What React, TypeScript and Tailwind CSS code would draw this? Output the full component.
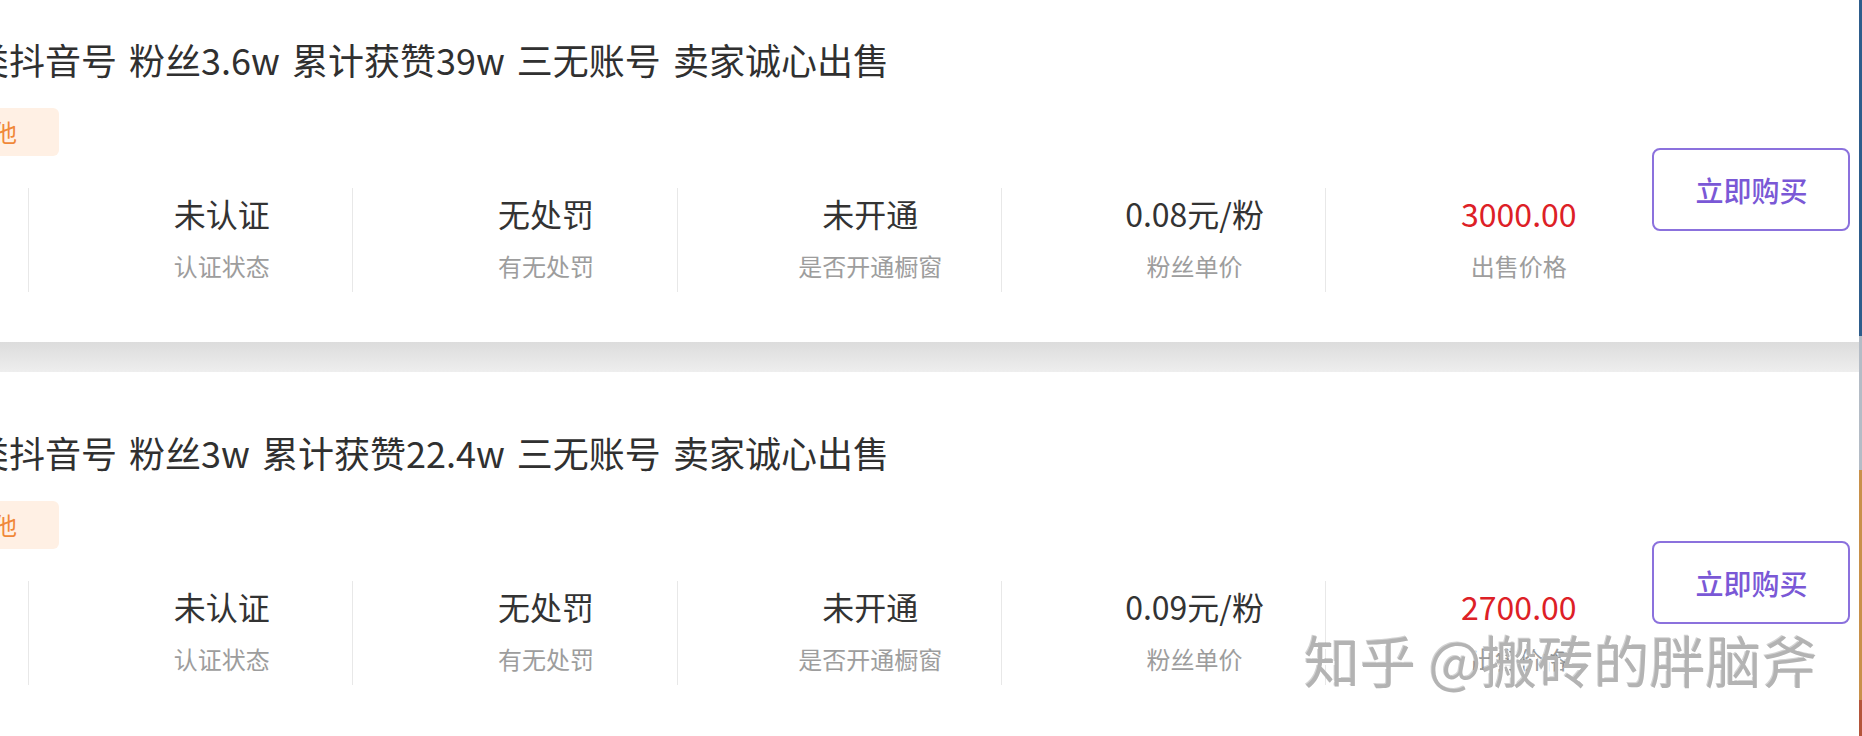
import React from 'react';

type Stat = { value: string; label: string; red?: boolean };

type Listing = { title: string; tag: string; stats: Stat[] };

const listings: Listing[] = [
  {
    title: '类抖音号 粉丝3.6w 累计获赞39w 三无账号 卖家诚心出售',
    tag: '其他',
    stats: [
      { value: '未认证', label: '认证状态' },
      { value: '无处罚', label: '有无处罚' },
      { value: '未开通', label: '是否开通橱窗' },
      { value: '0.08元/粉', label: '粉丝单价' },
      { value: '3000.00', label: '出售价格', red: true },
    ],
  },
  {
    title: '类抖音号 粉丝3w 累计获赞22.4w 三无账号 卖家诚心出售',
    tag: '其他',
    stats: [
      { value: '未认证', label: '认证状态' },
      { value: '无处罚', label: '有无处罚' },
      { value: '未开通', label: '是否开通橱窗' },
      { value: '0.09元/粉', label: '粉丝单价' },
      { value: '2700.00', label: '出售价格', red: true },
    ],
  },
];

const StatCell = ({ stat }: { stat: Stat }) => (
  <div className="w-[324.3px] h-[104px] shrink-0 border-l border-[#e8e8e8] pl-[62px] pt-[3px] flex flex-col items-center">
    <span className={`text-[32px] leading-[44px] whitespace-nowrap ${stat.red ? 'text-[#dd2026]' : 'text-[#333]'}`}>
      {stat.value}
    </span>
    <span className="mt-[15px] text-[24px] leading-[32px] text-[#9d9d9d] whitespace-nowrap">{stat.label}</span>
  </div>
);

const Card = ({ item, first }: { item: Listing; first?: boolean }) => (
  <div className={`h-[363px] shrink-0 bg-white flex flex-col ${first ? 'mt-[-21px]' : ''}`}>
    <h2 className="mt-[56px] ml-[-27px] text-[36px] leading-[48px] text-[#303030] font-normal whitespace-nowrap [word-spacing:4px]">
      {item.title}
    </h2>
    <div className="mt-[25px] ml-[-73px] flex">
      <span className="h-[48px] px-[42px] rounded-[6px] bg-[#fff0e4] text-[#f08838] text-[24px] leading-[48px]">
        {item.tag}
      </span>
    </div>
    <div className="mt-[32px] ml-[28px] flex items-start">
      {item.stats.map((s) => (
        <StatCell key={s.label} stat={s} />
      ))}
      <button className="mt-[-40px] ml-[3px] w-[198px] h-[83px] shrink-0 rounded-[8px] border-2 border-[#8b71dd] bg-white text-[28px] font-medium text-[#7a58d6] flex items-center justify-center">
        立即购买
      </button>
    </div>
  </div>
);

export default function App() {
  return (
    <div className="relative w-[1862px] h-[736px] overflow-hidden flex bg-white font-['Noto_Sans_CJK_SC',sans-serif]">
      <div className="w-[1859px] flex flex-col">
        <Card item={listings[0]} first />
        <div className="h-[30px] shrink-0 bg-gradient-to-b from-[#dcdcdc] to-[#eeeeee]" />
        <Card item={listings[1]} />
      </div>
      {/* edge of the neighbouring window */}
      <div className="w-[3px] flex flex-col">
        <div className="h-[336px] bg-[#2e5d8c]" />
        <div className="h-[134px] bg-[#b4bcc6]" />
        <div className="h-[230px] bg-[#c8904a]" />
        <div className="flex-1 bg-[#b4553a]" />
      </div>
      <div className="absolute left-[1304px] top-[631px] text-[56px] leading-[56px] text-[#b3b3b3] whitespace-nowrap [text-shadow:2px_2px_0_rgba(255,255,255,0.95),-1px_-1px_0_rgba(110,110,110,0.3)]">
        知乎 @搬砖的胖脑斧
      </div>
    </div>
  );
}
